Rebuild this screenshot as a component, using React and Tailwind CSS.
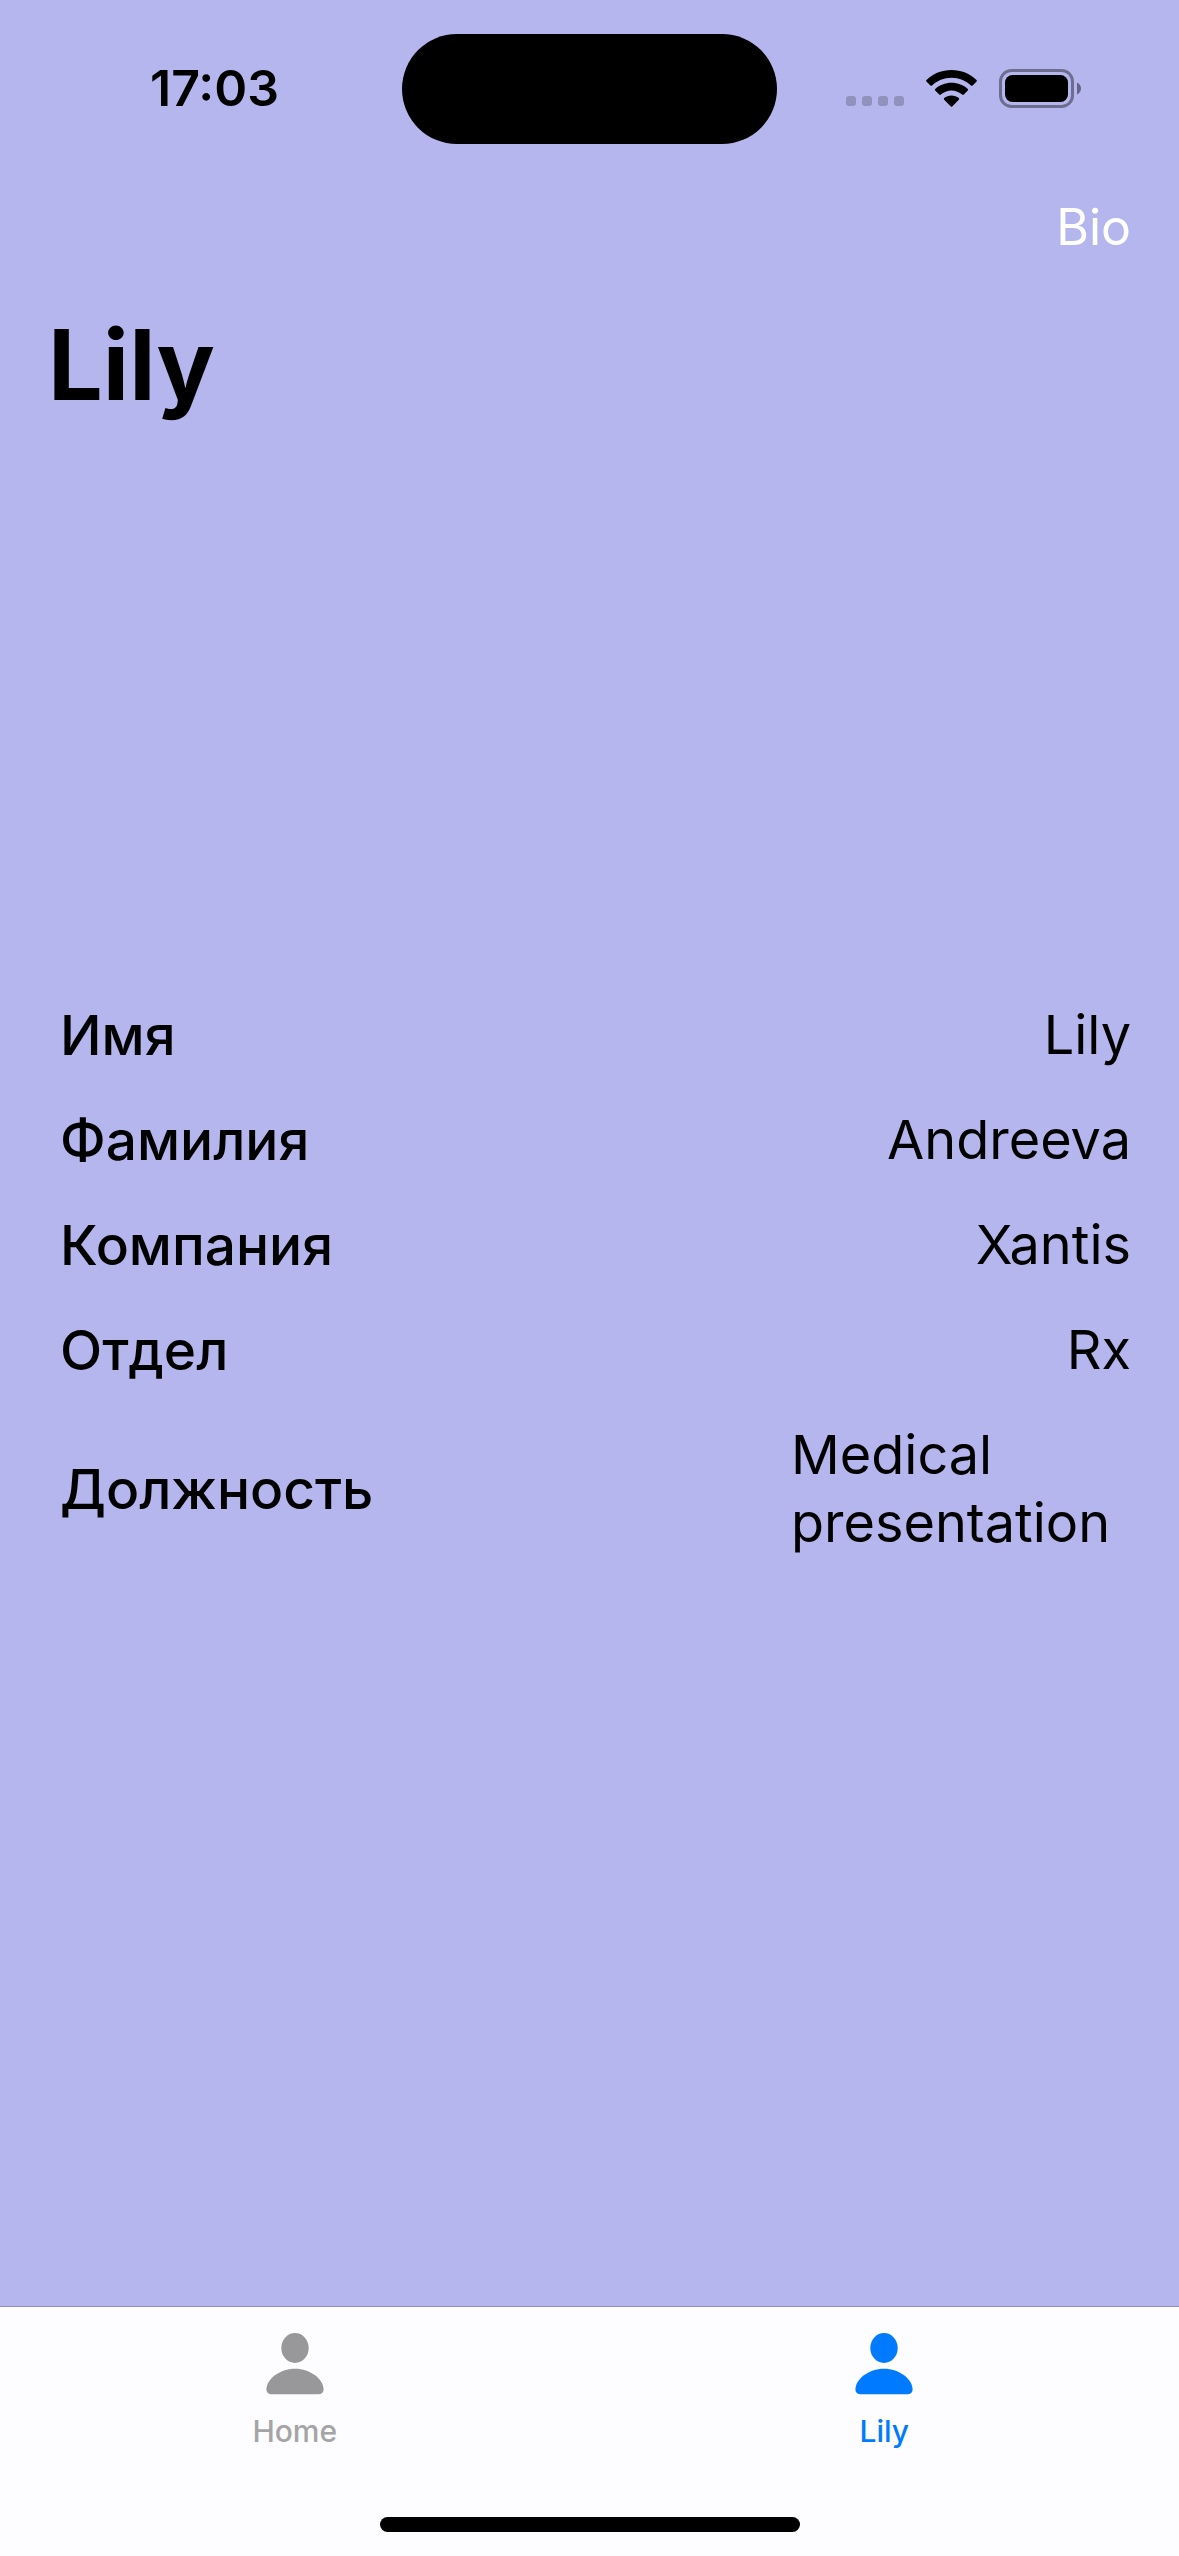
const details = [
  { label: "Имя", value: "Lily" },
  { label: "Фамилия", value: "Andreeva" },
  { label: "Компания", value: "Xantis" },
  { label: "Отдел", value: "Rx" },
  { label: "Должность", value: "Medical presentation" },
];

function SignalDots() {
  return (
    <div className="mt-[26px] flex gap-[6px]">
      <span className="size-[10px] rounded-[3px] bg-black/20" />
      <span className="size-[10px] rounded-[3px] bg-black/20" />
      <span className="size-[10px] rounded-[3px] bg-black/20" />
      <span className="size-[10px] rounded-[3px] bg-black/20" />
    </div>
  );
}

function WifiIcon() {
  return (
    <svg width="51" height="37" viewBox="0 0 51 37" aria-hidden="true">
      <path d="M25.5 0C35.2 0 44 3.7 50.5 9.9C51 10.4 51 11 50.6 11.5L46.6 15.4C46.2 15.8 45.5 15.8 45 15.4C39.9 10.6 33 7.7 25.5 7.7S11.1 10.6 6 15.4C5.5 15.8 4.8 15.8 4.4 15.4L.4 11.5C0 11 0 10.4.5 9.9C7 3.7 15.8 0 25.5 0Z" />
      <path d="M25.5 12.8C31.8 12.8 37.5 15.1 41.8 19C42.3 19.5 42.3 20.1 41.8 20.6L37.8 24.6C37.4 25 36.7 25 36.2 24.6C33.3 22 29.6 20.4 25.5 20.4S17.7 22 14.8 24.6C14.3 25 13.6 25 13.2 24.6L9.2 20.6C8.7 20.1 8.7 19.5 9.2 19C13.5 15.1 19.2 12.8 25.5 12.8Z" />
      <path d="M25.5 25.4C28.2 25.4 30.8 26.4 32.8 28.1C33.3 28.6 33.3 29.3 32.8 29.8L26.2 36.4C25.8 36.8 25.2 36.8 24.8 36.4L18.2 29.8C17.7 29.3 17.7 28.6 18.2 28.1C20.2 26.4 22.8 25.4 25.5 25.4Z" />
    </svg>
  );
}

function BatteryIcon() {
  return (
    <svg width="82" height="39" viewBox="0 0 82 39" aria-hidden="true">
      <rect x="1.5" y="1.5" width="72" height="36" rx="11" fill="none" stroke="black" strokeOpacity="0.4" strokeWidth="3" />
      <rect x="6" y="6" width="63" height="27" rx="7.5" />
      <path d="M78 13.5C80.4 14.5 82 16.9 82 19.5S80.4 24.5 78 25.5Z" fillOpacity="0.45" />
    </svg>
  );
}

function PersonIcon() {
  return (
    <svg width="58" height="62" viewBox="0 0 58 62" fill="currentColor" aria-hidden="true">
      <ellipse cx="29" cy="15" rx="13.7" ry="15" />
      <path d="M29 35.8C44.5 35.8 57.6 46.4 57.6 56.6C57.6 59.6 55.6 61.3 52.4 61.3H5.6C2.4 61.3.4 59.6.4 56.6C.4 46.4 13.5 35.8 29 35.8Z" />
    </svg>
  );
}

function Tab({ label, active }) {
  return (
    <button
      type="button"
      aria-current={active ? "page" : undefined}
      className={`flex flex-1 flex-col items-center gap-[18px] pt-[26px] ${active ? "text-[#007aff]" : "text-[#98989a]"}`}
    >
      <PersonIcon />
      <span className={`text-[30px] leading-[36px] font-medium ${active ? "" : "text-[#a5a5a7]"}`}>{label}</span>
    </button>
  );
}

export default function App() {
  return (
    <div className="flex min-h-screen flex-col bg-[#b6b6ee] font-['Inter','Noto_Sans',sans-serif] text-black">
      <div className="grid grid-cols-[1fr_375px_1fr] items-center pt-[34px]">
        <time className="pb-0.5 pl-[150px] text-[50px] leading-[60px] font-semibold">17:03</time>
        <div className="h-[110px] rounded-full bg-black" />
        <div className="flex items-center justify-end gap-[22px] pr-[98px] pb-0.5">
          <SignalDots />
          <WifiIcon />
          <BatteryIcon />
        </div>
      </div>

      <header className="mt-[17px]">
        <div className="flex h-[132px] items-center justify-end px-12">
          <button type="button" className="text-[50px] leading-[60px] text-white">Bio</button>
        </div>
        <h1 className="px-12 text-[97px] leading-[144px] font-bold">Lily</h1>
      </header>

      <main className="flex-1 pt-[564px] pr-12 pl-[60px]">
        <dl className="flex flex-col gap-[37px] leading-[68px]">
          {details.map(({ label, value }) => (
            <div key={label} className="flex items-center justify-between">
              <dt className="text-[55px] font-medium">{label}</dt>
              <dd className="max-w-[340px] text-[54px]">{value}</dd>
            </div>
          ))}
        </dl>
      </main>

      <nav className="border-t border-[#8c8cba] bg-[#fdfdff]">
        <div className="flex">
          <Tab label="Home" />
          <Tab label="Lily" active />
        </div>
        <div className="flex justify-center pt-[68px] pb-6">
          <div className="h-[15px] w-[420px] rounded-full bg-black" />
        </div>
      </nav>
    </div>
  );
}
